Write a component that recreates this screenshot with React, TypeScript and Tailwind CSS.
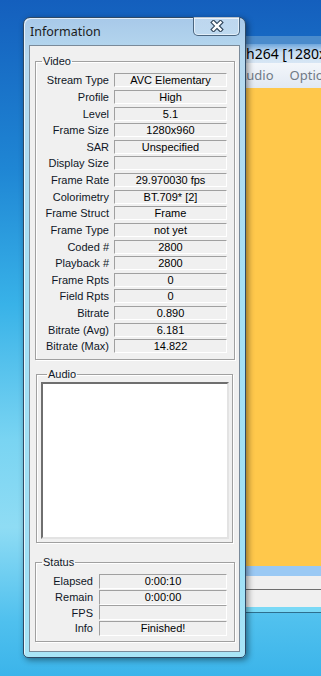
import React from 'react';

const videoRows: [string, string][] = [
    ['Stream Type', 'AVC Elementary'],
    ['Profile', 'High'],
    ['Level', '5.1'],
    ['Frame Size', '1280x960'],
    ['SAR', 'Unspecified'],
    ['Display Size', ''],
    ['Frame Rate', '29.970030 fps'],
    ['Colorimetry', 'BT.709* [2]'],
    ['Frame Struct', 'Frame'],
    ['Frame Type', 'not yet'],
    ['Coded #', '2800'],
    ['Playback #', '2800'],
    ['Frame Rpts', '0'],
    ['Field Rpts', '0'],
    ['Bitrate', '0.890'],
    ['Bitrate (Avg)', '6.181'],
    ['Bitrate (Max)', '14.822'],
];

const statusRows: [string, string][] = [
    ['Elapsed', '0:00:10'],
    ['Remain', '0:00:00'],
    ['FPS', ''],
    ['Info', 'Finished!'],
];

const groupBox = 'border border-[#a0a0a0] shadow-[inset_1px_1px_0_#ffffff,1px_1px_0_#ffffff]';
const valueBox = 'flex items-center justify-center border border-t-[#a0a0a0] border-l-[#a0a0a0] border-b-white border-r-white bg-[#f0f0f0] text-black leading-[12px]';

const Legend: React.FC<{ text: string }> = ({ text }) => (
    <legend className="ml-[6px] px-[1px] text-[11px] leading-[13px] text-[#101828]">{text}</legend>
);

const CloseGlyph = () => (
    <svg width="14" height="12" viewBox="0 0 14 12">
        <path d="M3.5 2.5 L10.5 9.5 M10.5 2.5 L3.5 9.5" stroke="#34495f" strokeWidth="4.6" strokeLinecap="square" />
        <path d="M3.5 2.5 L10.5 9.5 M10.5 2.5 L3.5 9.5" stroke="#ffffff" strokeWidth="2.4" strokeLinecap="square" />
    </svg>
);

const BehindWindow = () => (
    <div className="absolute left-[236px] top-[36px] w-[85px] h-[578px] flex flex-col overflow-hidden font-['Noto_Sans',sans-serif]">
        <div className="h-[8px] bg-[#4a8bcc]" />
        <div className="h-[19px] bg-[linear-gradient(180deg,#6ea6dc_0%,#c9def2_45%,#d7e6f4_100%)] pl-[10px] text-[14px] leading-[19px] text-black whitespace-nowrap">
            h264 [1280x9
        </div>
        <div className="h-[25px] bg-[linear-gradient(180deg,#f3f6fa_0%,#e2e9f3_100%)] flex items-center pl-[2px] gap-[16px] text-[13px] text-[#707a86] whitespace-nowrap">
            <span>Audio</span>
            <span>Optio</span>
        </div>
        <div className="h-[478px] bg-[#ffc84b]" />
        <div className="h-[10px] bg-[#9ac9f4]" />
        <div className="h-[14px] bg-[#f0f0f0] border-b border-[#6e6e6e]" />
        <div className="h-[17px] bg-[#f0f0f0]" />
        <div className="h-[6px] bg-[#7ad9f6] border-b border-[#2e6f8e]" />
    </div>
);

export default function App() {
    return (
        <div className="relative w-[321px] h-[676px] overflow-hidden bg-[linear-gradient(180deg,#145fbd_0%,#1f86d4_25%,#38b2e8_45%,#79d4f2_65%,#8fdcf4_78%,#4fc0ee_92%,#3bb4ea_100%)] font-['Liberation_Sans',sans-serif]">
            <BehindWindow />

            <div className="absolute left-[23px] top-[17px] w-[223px] h-[641px] rounded-t-[7px] rounded-b-[5px] border border-[#2f4a66] bg-[linear-gradient(180deg,#a8c9e9_0%,#b7d9ef_6%,#a6e0f5_40%,#9fe0f6_85%,#a9e5f7_100%)] shadow-[2px_2px_6px_rgba(0,0,0,0.45),inset_1px_1px_0_rgba(255,255,255,0.7)] flex flex-col">
                <div className="relative h-[27px] shrink-0">
                    <span className="absolute left-[6px] top-[6px] text-[12.5px] leading-[16px] text-[#1b1b1b] font-['Noto_Sans',sans-serif]">
                        Information
                    </span>
                    <div className="absolute right-[5px] -top-px w-[47px] h-[19px] rounded-b-[5px] border border-t-0 border-[#4b6680] bg-[linear-gradient(180deg,rgba(255,255,255,0.25)_0%,rgba(220,235,248,0.35)_100%)] shadow-[inset_0_0_0_1px_rgba(255,255,255,0.55)] flex items-center justify-center">
                        <CloseGlyph />
                    </div>
                </div>

                <div className="mx-[5px] h-[607px] border border-[#7a8a99] bg-[#f0f0f0] flex flex-col text-[11px]">
                    <fieldset className={`ml-[5px] mr-[4px] mt-[9px] pt-[4px] pb-[4px] ${groupBox}`}>
                        <Legend text="Video" />
                        <div className="grid grid-cols-[73px_113px] gap-x-[5px] auto-rows-[16.625px] items-center">
                            {videoRows.map(([label, value]) => (
                                <React.Fragment key={label}>
                                    <span className="text-right text-[#0f1626] whitespace-nowrap leading-[12px]">{label}</span>
                                    <div className={`h-[14px] ${valueBox}`}>{value}</div>
                                </React.Fragment>
                            ))}
                        </div>
                    </fieldset>

                    <fieldset className={`ml-[6px] mr-[6px] mt-[8px] pt-[1px] pb-[3px] pl-[4px] pr-[3px] ${groupBox}`}>
                        <Legend text="Audio" />
                        <div className="h-[157px] bg-white border-2 border-t-[#6f6f6f] border-l-[#6f6f6f] border-b-[#e3e3e3] border-r-[#e3e3e3]" />
                    </fieldset>

                    <fieldset className={`ml-[5px] mr-[4px] mt-[13px] pt-[5px] pb-[5px] ${groupBox}`}>
                        <Legend text="Status" />
                        <div className="grid grid-cols-[57px_128px] gap-x-[6px] auto-rows-[15.67px] items-center">
                            {statusRows.map(([label, value]) => (
                                <React.Fragment key={label}>
                                    <span className="text-right text-[#0f1626] whitespace-nowrap leading-[12px]">{label}</span>
                                    <div className={`h-[15px] ${valueBox}`}>{value}</div>
                                </React.Fragment>
                            ))}
                        </div>
                    </fieldset>
                </div>
            </div>
        </div>
    );
}
